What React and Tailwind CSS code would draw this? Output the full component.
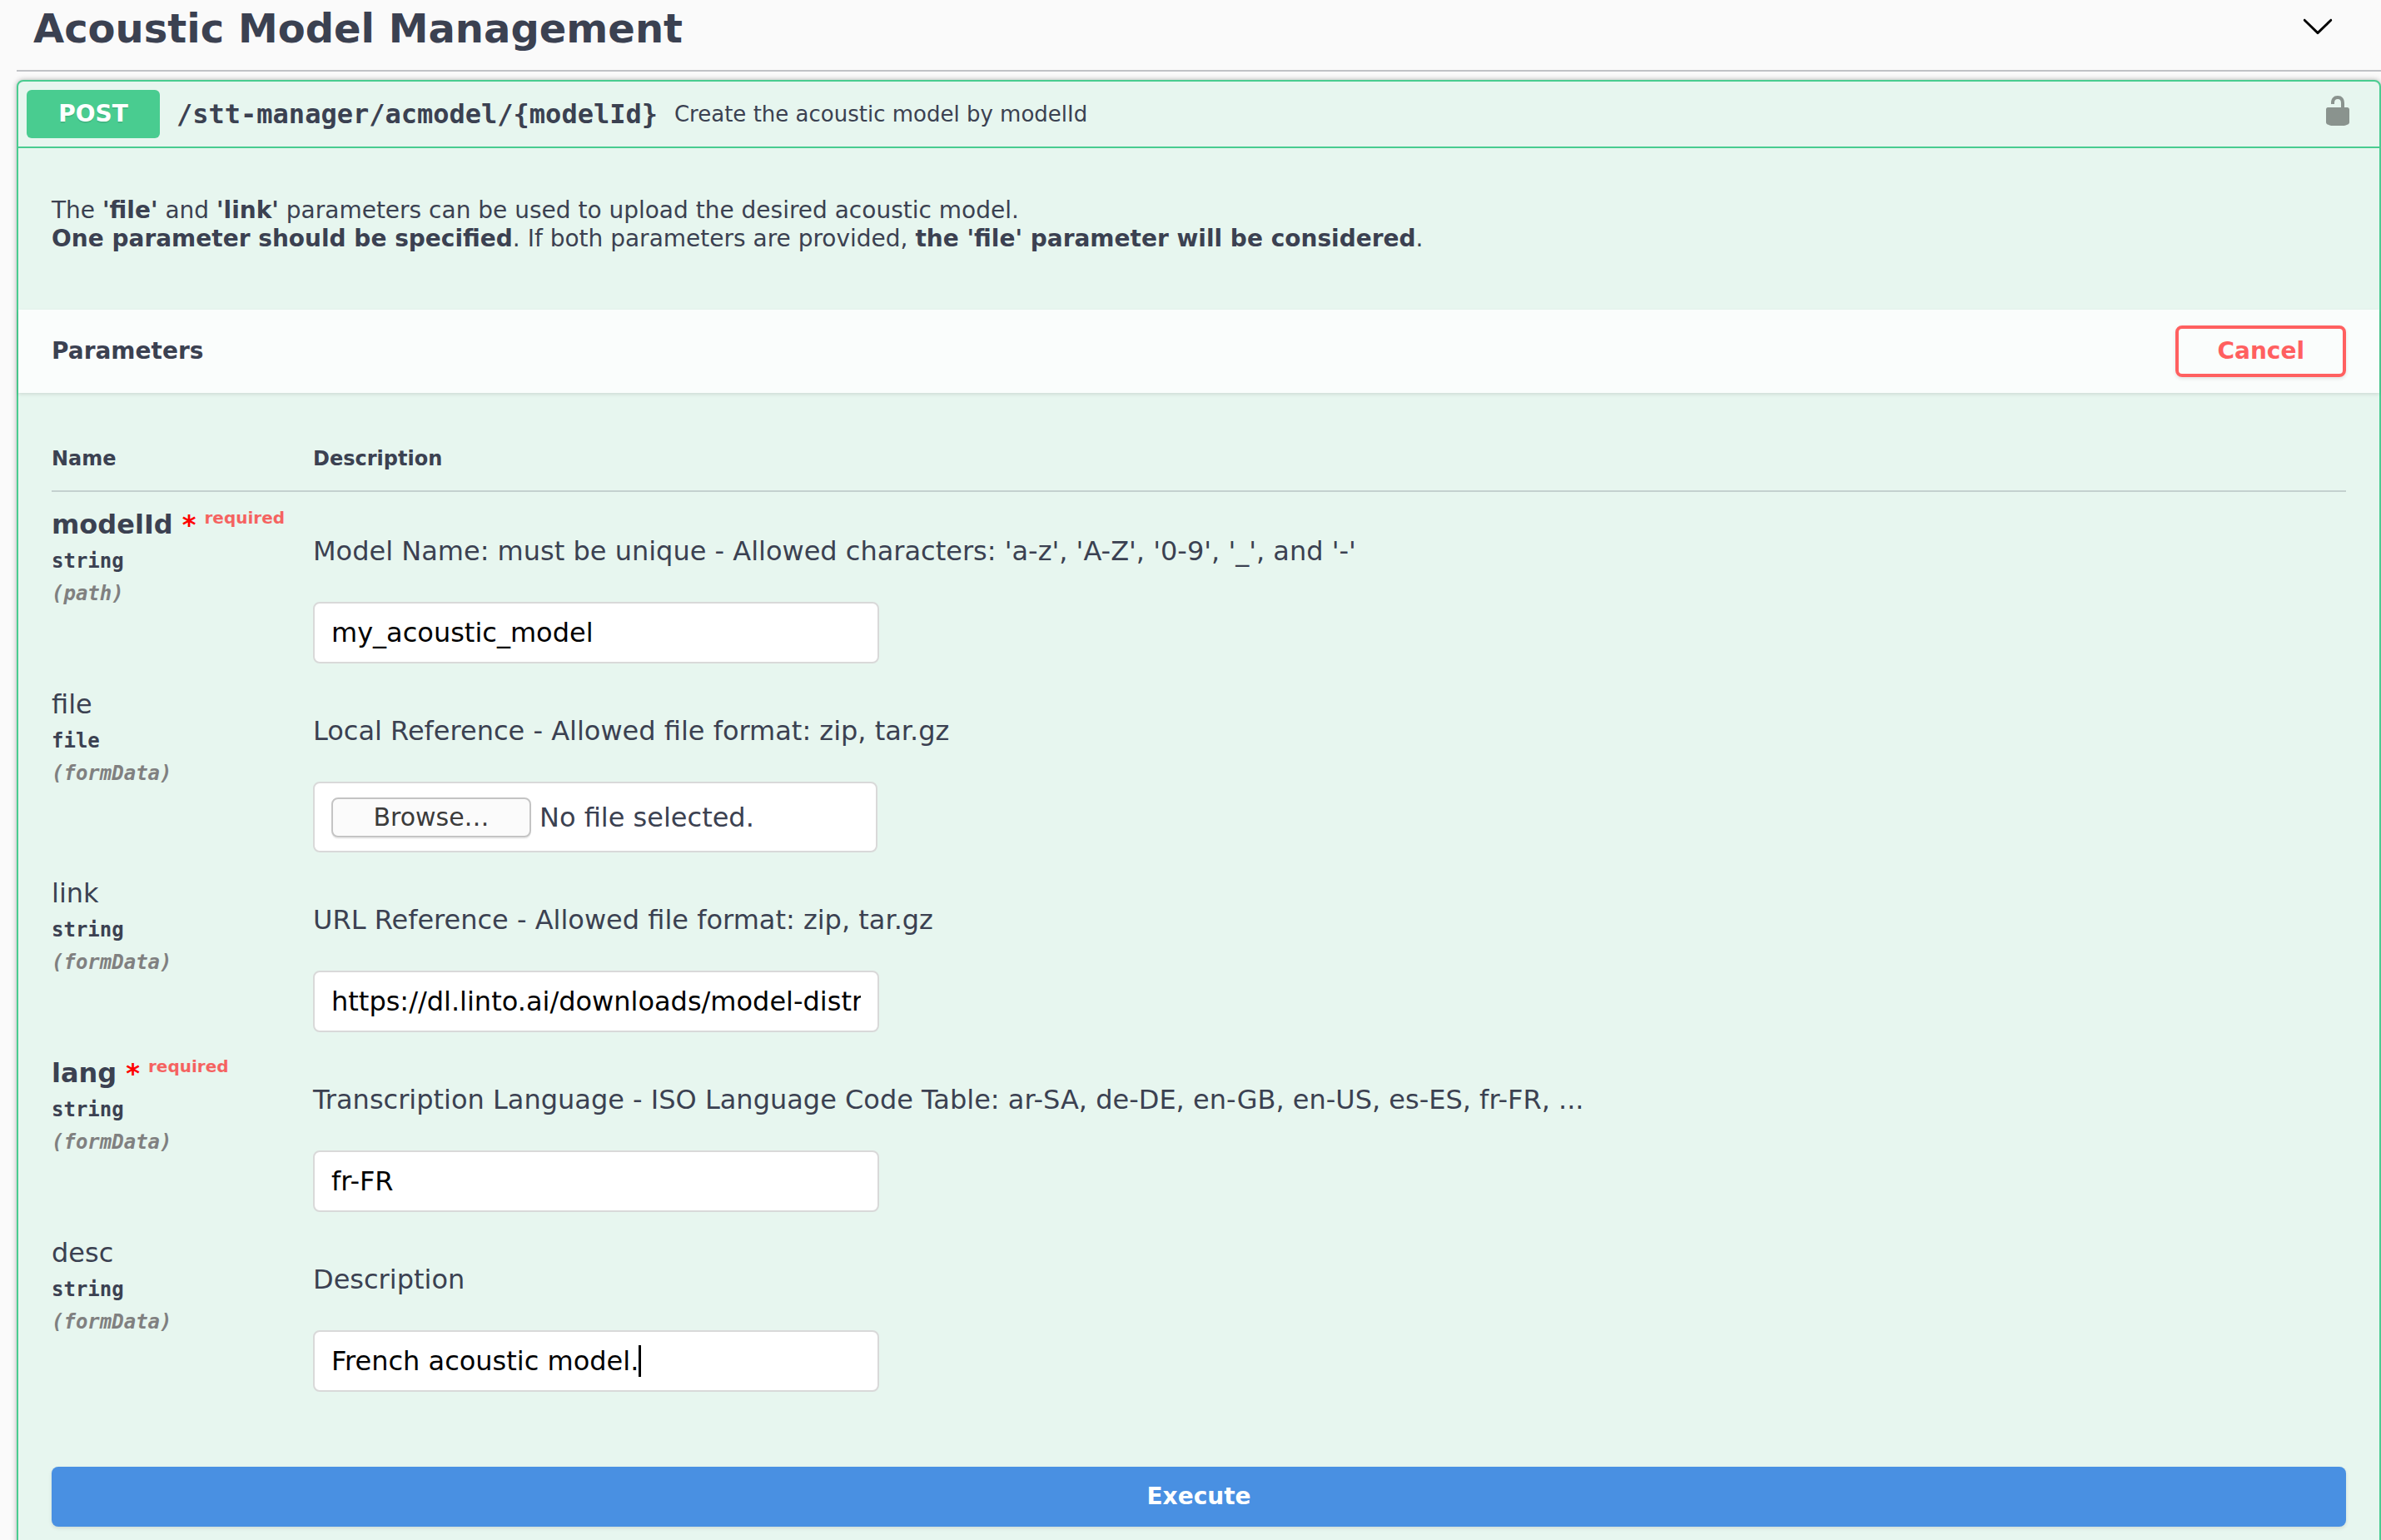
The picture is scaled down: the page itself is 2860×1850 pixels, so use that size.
import React, { useState } from "react";

const PARAMS = [
  { name: "modelId", type: "string", place: "(path)", required: true, text: "Model Name: must be unique - Allowed characters: 'a-z', 'A-Z', '0-9', '_', and '-'", value: "my_acoustic_model" },
  { name: "file", type: "file", place: "(formData)", text: "Local Reference - Allowed file format: zip, tar.gz" },
  { name: "link", type: "string", place: "(formData)", text: "URL Reference - Allowed file format: zip, tar.gz", value: "https://dl.linto.ai/downloads/model-distribution" },
  { name: "lang", type: "string", place: "(formData)", required: true, text: "Transcription Language - ISO Language Code Table: ar-SA, de-DE, en-GB, en-US, es-ES, fr-FR, ...", value: "fr-FR" },
  { name: "desc", type: "string", place: "(formData)", text: "Description", value: "French acoustic model.", caret: true },
];

function ChevronDown() {
  return (
    <svg viewBox="0 0 20 20" className="size-10" aria-hidden="true">
      <path d="M17.418 6.109c.272-.268.709-.268.979 0s.271.701 0 .969l-7.908 7.83c-.27.268-.707.268-.979 0l-7.908-7.83c-.27-.268-.27-.701 0-.969.271-.268.709-.268.979 0L10 13.25z" />
    </svg>
  );
}

function Unlocked() {
  return (
    <svg viewBox="0 0 20 20" className="size-10 opacity-40" aria-hidden="true">
      <path fill="#000" d="M15.8 8H14V5.6C14 2.703 12.665 1 10 1 7.334 1 6 2.703 6 5.6V6h2v-.801C8 3.754 8.797 3 10 3c1.203 0 2 .754 2 2.199V8H4c-.553 0-1 .646-1 1.199V17c0 .549.428 1.139.951 1.307l1.197.387C5.672 18.861 6.55 19 7.1 19h5.8c.549 0 1.428-.139 1.951-.307l1.196-.387c.524-.167.953-.757.953-1.306V9.199C17 8.646 16.352 8 15.8 8z" />
    </svg>
  );
}

function TextField({ param }) {
  const [value, setValue] = useState(param.value);
  return (
    <div className="relative w-full max-w-[680px]">
      <input
        id={param.name}
        type="text"
        value={value}
        onChange={(e) => setValue(e.target.value)}
        className="block h-[74px] w-full rounded-lg border-2 border-[#d9d9d9] bg-white px-5 text-[32px] text-black outline-none"
      />
      {param.caret && (
        <span aria-hidden="true" className="pointer-events-none absolute top-[18px] left-[391px] h-[38px] w-[3px] bg-black" />
      )}
    </div>
  );
}

function FileField({ param }) {
  const [file, setFile] = useState("");
  return (
    <label className="flex h-[85px] w-full max-w-[678px] items-center gap-2.5 rounded-lg border-2 border-[#d9d9d9] bg-white px-5 text-[32px]">
      <input id={param.name} type="file" className="sr-only" onChange={(e) => setFile(e.target.value)} />
      <span className="flex h-12 w-60 items-center justify-center rounded-lg border-2 border-[#c4c4c4] bg-[#fbfbfb] text-[30px] text-[#3b3b3b] shadow-[0_2px_0_rgba(0,0,0,0.06)]">Browse…</span>
      <span>{file || "No file selected."}</span>
    </label>
  );
}

function ParamRow({ param }) {
  return (
    <tr className="align-top">
      <td className="w-[314px] pt-5 text-[24px]">
        <label htmlFor={param.name} className={param.required ? "flex h-[38px] items-start text-[32px] leading-[38px] font-bold" : "flex h-[38px] text-[32px] leading-[38px]"}>
          {param.name}
          {param.required && (
            <>
              <span className="ml-[11px] text-[#f00]">*</span>
              <span className="ml-2.5 text-[20px] leading-[22px] text-[#f00]/60">required</span>
            </>
          )}
        </label>
        <div className="mt-[11px] font-['DejaVu_Sans_Mono',monospace] leading-7 font-bold">{param.type}</div>
        <div className="mt-[11px] font-['DejaVu_Sans_Mono',monospace] leading-7 font-bold text-[#808080] italic">{param.place}</div>
      </td>
      <td className="pt-[52px] pb-2.5">
        <p className="mb-[42px] text-[32px] leading-[38px]">{param.text}</p>
        {param.type === "file" ? <FileField param={param} /> : <TextField param={param} />}
      </td>
    </tr>
  );
}

export default function App() {
  return (
    <main className="h-screen overflow-hidden bg-[#fafafa] pl-5 font-['DejaVu_Sans',sans-serif] text-[#3b4151]">
      <header className="flex h-[86px] items-start justify-between border-b-2 border-[#3b4151]/30 pr-14 pl-5">
        <h1 className="text-[48px] leading-[68px] font-bold">Acoustic Model Management</h1>
        <button type="button" aria-label="Collapse section" className="mt-[11px] text-black"><ChevronDown /></button>
      </header>

      <section className="mt-2.5 rounded-lg border-2 border-[#49cc90] bg-[#e7f6ef] shadow-[0_0_6px_rgba(0,0,0,0.3)]">
        <div className="flex h-20 items-center border-b-2 border-[#49cc90] pr-[30px] pl-2.5">
          <span className="w-40 rounded-md bg-[#49cc90] py-3 text-center text-[28px] leading-[34px] font-bold text-white [text-shadow:0_2px_0_rgba(0,0,0,0.1)]">POST</span>
          <span className="px-5 font-['DejaVu_Sans_Mono',monospace] text-[32px] font-bold">/stt-manager/acmodel/&#123;modelId&#125;</span>
          <span className="flex-1 text-[26px]">Create the acoustic model by modelId</span>
          <button type="button" aria-label="Authorize" className="pb-2"><Unlocked /></button>
        </div>

        <div className="px-10 pt-[58px] pb-[68px] text-[28px] leading-[34px]">
          <p>The <b>'file'</b> and <b>'link'</b> parameters can be used to upload the desired acoustic model.</p>
          <p><b>One parameter should be specified</b>. If both parameters are provided, <b>the 'file' parameter will be considered</b>.</p>
        </div>

        <div className="flex h-[100px] items-center justify-between bg-white/80 px-10 shadow-[0_2px_4px_rgba(0,0,0,0.1)]">
          <h2 className="text-[28px] font-bold">Parameters</h2>
          <button type="button" className="h-[62px] rounded-lg border-4 border-[#ff6060] px-[46px] text-[28px] font-bold text-[#ff6060] shadow-[0_2px_4px_rgba(0,0,0,0.1)]">Cancel</button>
        </div>

        <div className="px-10 pt-10 pb-20">
          <table className="w-full border-collapse">
            <thead>
              <tr className="border-b-2 border-[#3b4151]/20 text-left text-[24px] leading-7">
                <th className="pt-[25px] pb-6">Name</th>
                <th className="pt-[25px] pb-6">Description</th>
              </tr>
            </thead>
            <tbody>
              {PARAMS.map((param) => <ParamRow key={param.name} param={param} />)}
            </tbody>
          </table>
          <button type="button" className="mt-20 h-[72px] w-full rounded-lg bg-[#4990e2] text-[28px] font-bold text-white shadow-[0_2px_4px_rgba(0,0,0,0.1)]">Execute</button>
        </div>
      </section>
    </main>
  );
}
